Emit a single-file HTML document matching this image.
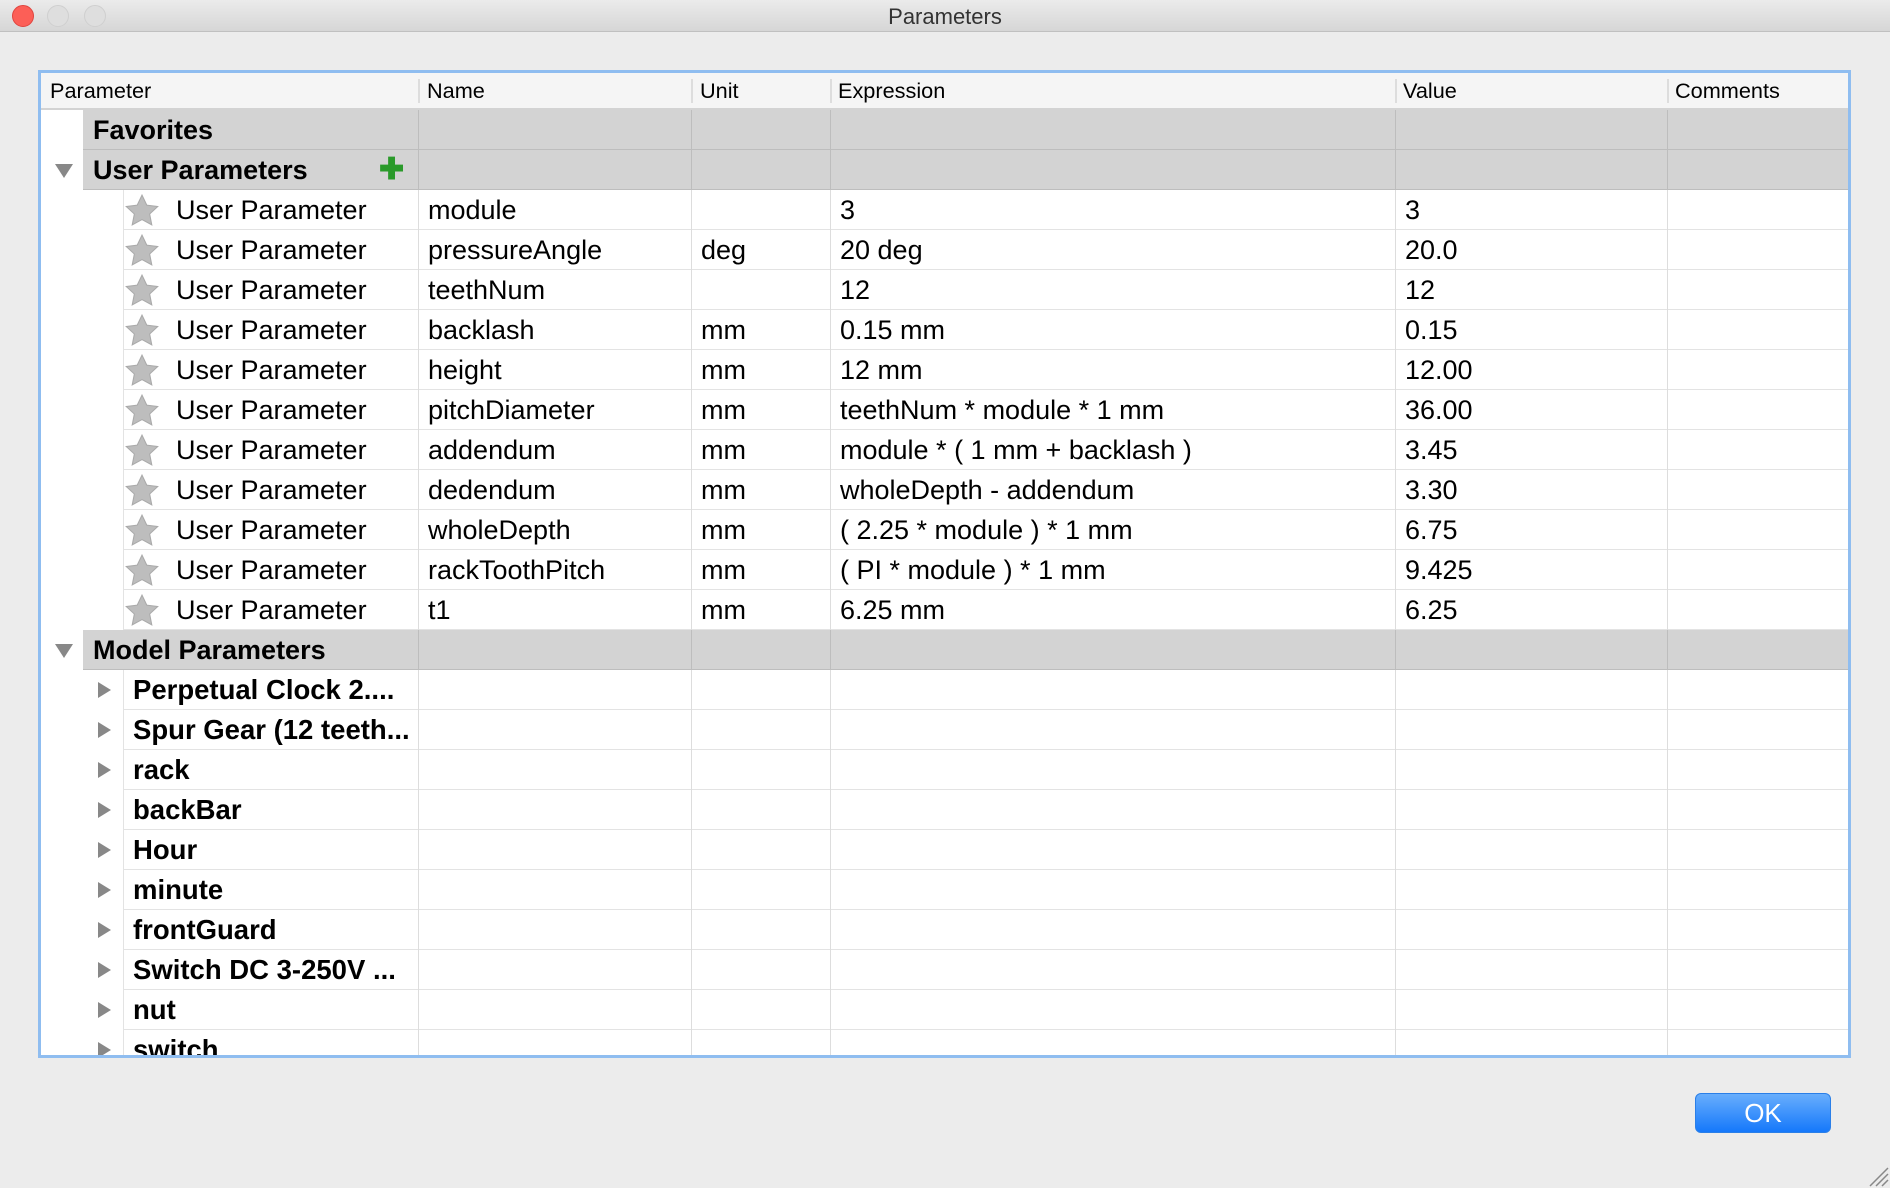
<!DOCTYPE html>
<html><head><meta charset="utf-8"><style>
*{margin:0;padding:0;box-sizing:border-box}
body{width:1890px;height:1188px;background:#ececec;font-family:"Liberation Sans",Arial,sans-serif;position:relative;overflow:hidden;color:#000}
.tb{position:absolute;left:0;top:0;width:1890px;height:32px;background:linear-gradient(#ebebeb,#d6d6d6);border-bottom:1px solid #c0c0c0;text-align:center;font-size:22px;line-height:34px;color:#333}
.dot{position:absolute;top:5px;width:22px;height:22px;border-radius:50%;border:1px solid #cfcfcf;background:#dedede}
.frame{position:absolute;left:38px;top:70px;width:1813px;height:988px;border:3px solid #8fbdf0;background:#fff;overflow:hidden}
.hdr{position:absolute;left:0;top:0;width:100%;height:37px;background:#f5f5f5;border-bottom:2px solid #d3d3d3;font-size:21.7px;line-height:35px}
.hdr span{position:absolute;top:0}
.hdr i{position:absolute;top:6px;width:2px;height:24px;background:#ddd}
.row{position:absolute;left:0;width:100%;height:40px;font-size:27px;line-height:40px}
.row span{position:absolute;top:0;white-space:nowrap}
.g{background:#d3d3d3;border-bottom:1px solid #bdbdbd}
.b{font-weight:bold}
.vl{position:absolute;top:0;height:100%;width:1px;background:#ddd}
.w{border-bottom:1px solid #e3e3e3}
.tri{position:absolute;width:0;height:0}
</style></head><body>
<div class="tb">Parameters
<div class="dot" style="left:12px;background:#fc5f57;border-color:#e0443e"></div>
<div class="dot" style="left:47px"></div>
<div class="dot" style="left:84px"></div>
</div>
<div class="frame">
<div class="hdr">
<span style="left:9px">Parameter</span>
<i style="left:377px"></i><span style="left:386px">Name</span>
<i style="left:650px"></i><span style="left:659px">Unit</span>
<i style="left:789px"></i><span style="left:797px">Expression</span>
<i style="left:1354px"></i><span style="left:1362px">Value</span>
<i style="left:1626px"></i><span style="left:1634px">Comments</span>
</div>
<div id="rows"></div>
</div>
<div style="position:absolute;left:1695px;top:1093px;width:136px;height:40px;border-radius:6px;background:linear-gradient(#68aefc,#1578fb);border:1px solid #2a7fe8;color:#fff;font-size:26px;text-align:center;line-height:38px">OK</div>
<svg style="position:absolute;left:1866px;top:1164px" width="24" height="24"><path d="M4 22L22 4M10 22L22 10M16 22L22 16" stroke="#888" stroke-width="1.5"/></svg>
<script>
var F=document.getElementById('rows');
var C=[377,650,789,1354,1626];
function vl(dark){return C.map(function(x){return '<div class="vl" style="left:'+x+'px;'+(dark?'background:#bdbdbd':'')+'"></div>'}).join('')}
var star='<svg style="position:absolute;left:84px;top:4px" width="34" height="32" viewBox="0 0 32 30"><path d="M16 1l4.5 9.4 10.3 1.3-7.6 7.1 2 10.2L16 24l-9.2 5 2-10.2-7.6-7.1 10.3-1.3z" fill="#bdbdbd" stroke="#aaa" stroke-width="1"/></svg>';
var down='<div class="tri" style="left:14px;top:14px;border-left:9px solid transparent;border-right:9px solid transparent;border-top:14px solid #888"></div>';
var right='<div class="tri" style="left:57px;top:12px;border-top:8px solid transparent;border-bottom:8px solid transparent;border-left:13px solid #888"></div>';
var h='',y=37;
function grp(t,tri,plus){h+='<div class="row" style="top:'+y+'px"><div class="g" style="position:absolute;left:42px;right:0;top:0;height:40px"></div>'+vl(1)+(tri?down:'')+'<span class="b" style="left:52px">'+t+'</span>'+(plus?'<span style="left:338px;color:#2a9a2a;font-weight:bold;font-size:30px">&#10010;</span>':'')+'</div>';y+=40}
grp('Favorites',0,0);grp('User Parameters',1,1);
var U=[['module','','3','3'],['pressureAngle','deg','20 deg','20.0'],['teethNum','','12','12'],['backlash','mm','0.15 mm','0.15'],['height','mm','12 mm','12.00'],['pitchDiameter','mm','teethNum * module * 1 mm','36.00'],['addendum','mm','module * ( 1 mm + backlash )','3.45'],['dedendum','mm','wholeDepth - addendum','3.30'],['wholeDepth','mm','( 2.25 * module ) * 1 mm','6.75'],['rackToothPitch','mm','( PI * module ) * 1 mm','9.425'],['t1','mm','6.25 mm','6.25']];
U.forEach(function(r){h+='<div class="row" style="top:'+y+'px"><div class="w" style="position:absolute;left:82px;right:0;top:0;height:40px;border-left:1px solid #e3e3e3"></div>'+vl(0)+star+'<span style="left:135px">User Parameter</span><span style="left:387px">'+r[0]+'</span><span style="left:660px">'+r[1]+'</span><span style="left:799px">'+r[2]+'</span><span style="left:1364px">'+r[3]+'</span></div>';y+=40});
grp('Model Parameters',1,0);
['Perpetual Clock 2....','Spur Gear (12 teeth...','rack','backBar','Hour','minute','frontGuard','Switch DC 3-250V ...','nut','switch'].forEach(function(t){h+='<div class="row" style="top:'+y+'px"><div class="w" style="position:absolute;left:82px;right:0;top:0;height:40px;border-left:1px solid #e3e3e3"></div>'+vl(0)+right+'<span class="b" style="left:92px;font-size:27.5px">'+t+'</span></div>';y+=40});
F.innerHTML=h;
</script>
</body></html>
